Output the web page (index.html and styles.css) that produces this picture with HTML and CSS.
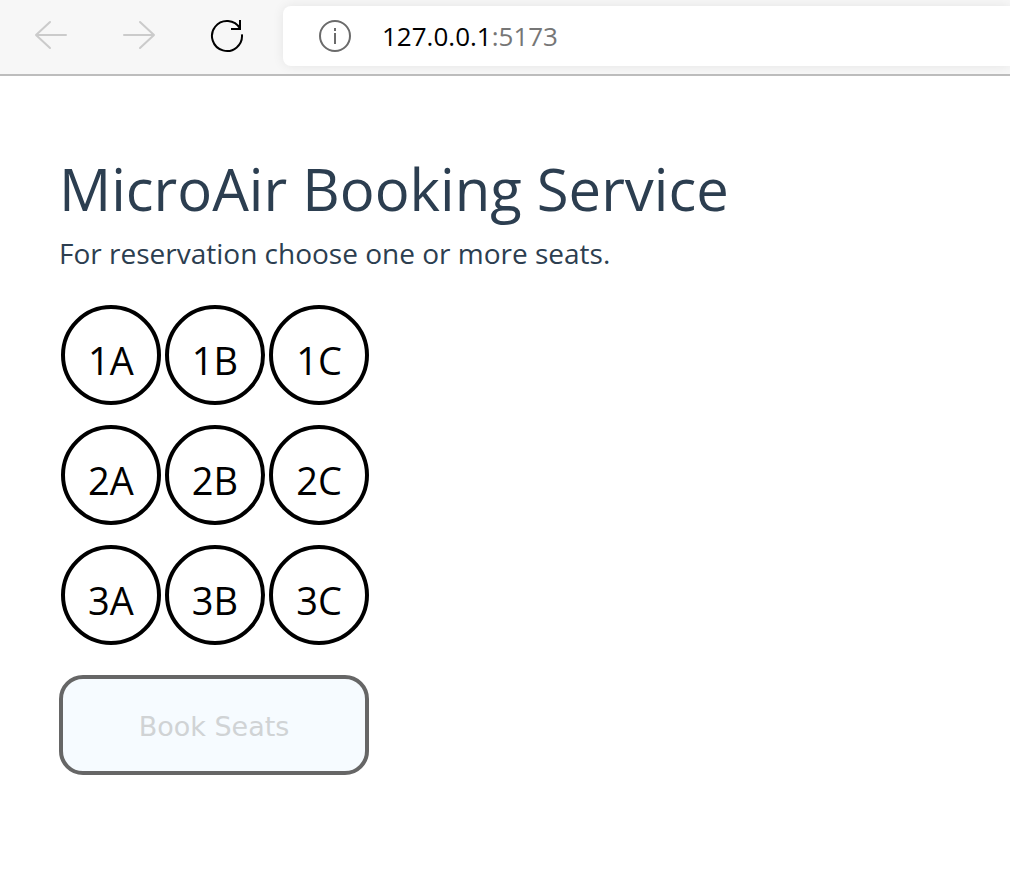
FILE: index.html
```html
<!DOCTYPE html>
<html lang="en">
<head>
<meta charset="utf-8">
<title>MicroAir Booking Service</title>
<link rel="stylesheet" href="styles.css">
</head>
<body>
<header class="toolbar">
  <nav class="nav" aria-label="Browser">
    <button class="icon-button" type="button" aria-label="Back" disabled>
      <svg class="icon arrow" viewBox="0 0 34 34"><path d="M32 16H2M16 3L2 16l14 13"/></svg>
    </button>
    <button class="icon-button" type="button" aria-label="Forward" disabled>
      <svg class="icon arrow" viewBox="0 0 34 34"><path d="M2 16h30M18 3l14 13-14 13"/></svg>
    </button>
    <button class="icon-button" type="button" aria-label="Reload">
      <svg class="icon reload" viewBox="0 0 34 34"><path d="M31.900 15.300A15 15 0 1 1 30 9.500M30 1v9h-9"/></svg>
    </button>
  </nav>
  <div class="address">
    <button class="icon-button" type="button" aria-label="Site information">
      <svg class="icon info" viewBox="0 0 34 34"><circle cx="17" cy="17" r="15"/><path d="M17 14v11M17 9v3"/></svg>
    </button>
    <span class="url">127.0.0.1<span class="port">:5173</span></span>
  </div>
</header>
<main class="page">
  <h1 class="title">MicroAir Booking Service</h1>
  <p class="hint">For reservation choose one or more seats.</p>
  <form class="booking">
    <div class="seats">
      <button class="seat" type="button">1A</button>
      <button class="seat" type="button">1B</button>
      <button class="seat" type="button">1C</button>
      <button class="seat" type="button">2A</button>
      <button class="seat" type="button">2B</button>
      <button class="seat" type="button">2C</button>
      <button class="seat" type="button">3A</button>
      <button class="seat" type="button">3B</button>
      <button class="seat" type="button">3C</button>
    </div>
    <button class="book" type="submit" disabled>Book Seats</button>
  </form>
</main>
</body>
</html>
```
FILE: styles.css
```css
* {
  box-sizing: border-box;
}

body {
  margin: 0;
  background: #fff;
  color: #2c3e50;
  font-family: "Segoe UI", "Open Sans", "Noto Sans", sans-serif;
}

.toolbar {
  display: flex;
  padding: 6px 0 8px;
  background: #f7f7f7;
  border-bottom: 2px solid #bdbdbd;
}

.nav {
  display: flex;
  align-items: center;
  gap: 54px;
  padding: 0 39px 0 34px;
}

.icon-button {
  display: flex;
  padding: 0;
  border: 0;
  background: none;
}

.icon {
  width: 34px;
  height: 34px;
  fill: none;
  stroke: #000;
  stroke-width: 2;
}

.arrow {
  stroke: #cbcbcb;
  stroke-linecap: round;
  stroke-linejoin: round;
}

.info {
  stroke: #6b6b6b;
}

.address {
  display: flex;
  flex: 1;
  align-items: center;
  gap: 30px;
  height: 60px;
  padding-left: 35px;
  border-radius: 8px 0 0 8px;
  background: #fff;
  box-shadow: 0 0 12px rgba(0, 0, 0, 0.08);
}

.url {
  color: #000;
  font-size: 26px;
  line-height: 36px;
}

.port {
  color: #767676;
}

.page {
  padding: 79px 59px 100px;
}

.title {
  margin: 0;
  font-size: 58px;
  font-weight: 400;
  line-height: 68px;
}

.hint {
  margin: 0;
  padding-top: 10px;
  font-size: 28px;
  line-height: 40px;
}

.booking {
  display: inline-grid;
  gap: 30px;
  padding-top: 32px;
}

.seats {
  display: grid;
  grid-template-columns: repeat(3, 100px);
  gap: 20px 4px;
  padding-left: 2px;
}

.seat {
  height: 100px;
  padding: 10px 0 0;
  border: 4px solid #000;
  border-radius: 50%;
  background: #fff;
  color: #000;
  font-family: inherit;
  font-size: 38px;
}

.book {
  height: 100px;
  padding: 2px 0 0;
  border: 4px solid #666;
  border-radius: 24px;
  background: #f6fbff;
  color: #d0d3d5;
  font-family: Verdana, "DejaVu Sans", sans-serif;
  font-size: 27px;
}
```
